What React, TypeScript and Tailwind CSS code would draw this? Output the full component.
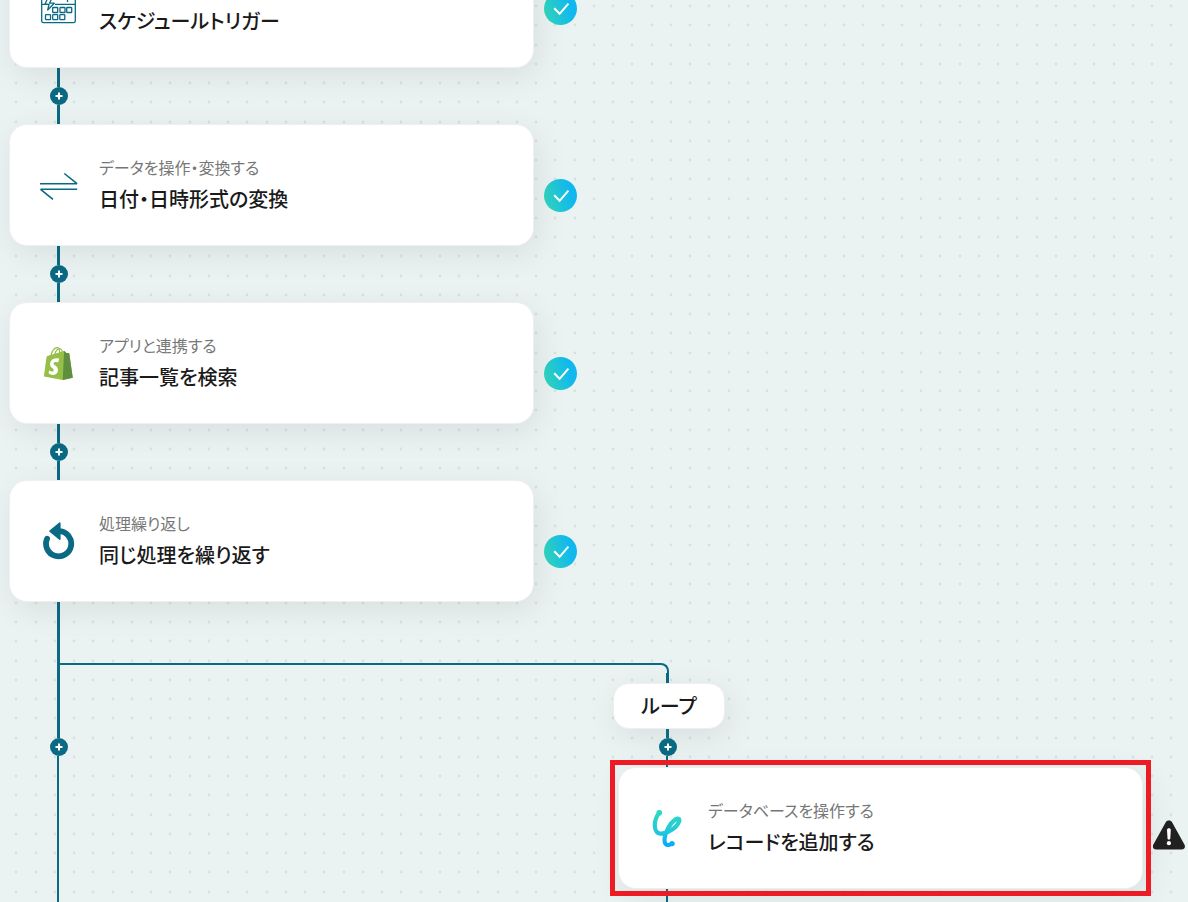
import React from 'react';

const ScheduleIcon: React.FC = () => (
  <svg className="size-[38px]" viewBox="0 0 38 38" fill="none" stroke="#0a6a83" strokeWidth="1.3" aria-hidden="true">
    <path d="M11.5 5H3.5C2.4 5 1.7 5.7 1.7 6.7V33C1.7 34 2.4 34.6 3.5 34.6H33.6C34.6 34.6 35.3 34 35.3 33V6.7C35.3 5.7 34.6 5 33.6 5H17" />
    <path d="M2 16.4H8M15 16.4H35M27.5 9V14" />
    <path d="M13.5 7H9L5 16.3H9L7.7 22L14.3 15.2H9.5Z" strokeLinejoin="round" />
    <rect x="12.7" y="19.5" width="5" height="5" rx="0.6" />
    <rect x="20" y="19.5" width="5" height="5" rx="0.6" />
    <rect x="26.7" y="19.5" width="5" height="5" rx="0.6" />
    <rect x="5.5" y="26.6" width="5" height="5" rx="0.6" />
    <rect x="12.7" y="26.6" width="5" height="5" rx="0.6" />
    <rect x="19.8" y="26.6" width="5" height="5" rx="0.6" />
  </svg>
);

const ConvertIcon: React.FC = () => (
  <svg className="size-[38px]" viewBox="0 0 38 38" fill="none" stroke="#0a6a83" strokeWidth="1.6" aria-hidden="true">
    <path d="M0 17.7H37L24.3 7.5" strokeLinejoin="bevel" />
    <path d="M37.2 23.3H0.6L13 33.4" strokeLinejoin="bevel" />
  </svg>
);

const ShopifyIcon: React.FC = () => (
  <svg className="h-[33px] w-[30px]" viewBox="0 0 256 292" preserveAspectRatio="xMinYMid" aria-hidden="true">
    <path
      fill="#95BF46"
      d="M223.774 57.34c-.201-1.46-1.48-2.268-2.537-2.357-1.055-.088-23.383-1.743-23.383-1.743s-15.507-15.395-17.209-17.099c-1.703-1.703-5.029-1.185-6.32-.805-.19.056-3.388 1.043-8.678 2.68-5.18-14.906-14.322-28.604-30.405-28.604-.444 0-.901.018-1.358.044C129.31 3.407 123.644.779 118.75.779c-37.465 0-55.364 46.835-60.976 70.635-14.558 4.511-24.9 7.718-26.221 8.133-8.126 2.549-8.383 2.805-9.45 10.462C21.3 95.806.038 260.235.038 260.235l165.678 31.042 89.77-19.42S223.973 58.8 223.775 57.34zM156.49 40.848l-14.019 4.339c.005-.988.01-1.96.01-3.023 0-9.264-1.286-16.723-3.349-22.636 8.287 1.04 13.806 10.469 17.358 21.32zm-27.638-19.483c2.304 5.773 3.802 14.058 3.802 25.238 0 .572-.005 1.095-.01 1.624-9.117 2.824-19.024 5.89-28.953 8.966 5.575-21.516 16.025-31.908 25.161-35.828zm-11.131-10.537c1.617 0 3.246.549 4.805 1.622-12.007 5.65-24.877 19.88-30.312 48.297l-22.886 7.088C75.694 46.16 90.81 10.828 117.72 10.828z"
    />
    <path
      fill="#5E8E3E"
      d="M221.237 54.983c-1.055-.088-23.383-1.743-23.383-1.743s-15.507-15.395-17.209-17.099c-.637-.634-1.496-.959-2.394-1.099l-12.527 256.233 89.762-19.418S223.972 58.8 223.774 57.34c-.201-1.46-1.48-2.268-2.537-2.357"
    />
    <path
      fill="#fff"
      d="M135.242 104.585l-11.069 32.926s-9.698-5.176-21.586-5.176c-17.428 0-18.305 10.937-18.305 13.693 0 15.038 39.2 20.8 39.2 56.024 0 27.713-17.577 45.558-41.277 45.558-28.44 0-42.984-17.7-42.984-17.7l7.615-25.16s14.95 12.835 27.565 12.835c8.243 0 11.596-6.49 11.596-11.232 0-19.616-32.16-20.491-32.16-52.724 0-27.129 19.472-53.382 58.778-53.382 15.145 0 22.627 4.338 22.627 4.338z"
    />
  </svg>
);

const RepeatIcon: React.FC = () => (
  <svg className="size-[38px]" viewBox="0 0 38 38" fill="none" aria-hidden="true">
    <path d="M19.5 9.2A12.6 12.6 0 1 1 7.1 16.7" stroke="#0a6a83" strokeWidth="5.8" strokeLinecap="round" />
    <path d="M10 9.2L19.8 1.2V17.2Z" fill="#0a6a83" stroke="#0a6a83" strokeWidth="1.6" strokeLinejoin="round" />
  </svg>
);

const DatabaseIcon: React.FC = () => (
  <svg className="size-[38px]" viewBox="0 0 38 38" fill="none" aria-hidden="true">
    <defs>
      <linearGradient id="database-gradient" x1="0" y1="0" x2="0" y2="38" gradientUnits="userSpaceOnUse">
        <stop offset="0.1" stopColor="#2dd8c0" />
        <stop offset="0.6" stopColor="#22c8dc" />
        <stop offset="0.95" stopColor="#06adf8" />
      </linearGradient>
    </defs>
    <path
      d="M10.3 3.4C7 8 5.6 12.6 5.8 17C6 22.4 8.6 25.2 13 24.6C21 23.6 28.6 17.6 30.2 12.2C30.9 9.6 28.8 9 26.4 10.4C20.6 14.2 16.4 23 15.6 29.6C15.2 34 16.8 36.2 19.4 36C21.6 35.8 22 34.6 23.4 34.8"
      stroke="url(#database-gradient)"
      strokeWidth="4.2"
      strokeLinecap="round"
    />
    <circle cx="10.3" cy="3.7" r="2.8" fill="url(#database-gradient)" />
    <circle cx="23" cy="34.6" r="2.6" fill="url(#database-gradient)" />
  </svg>
);

const DoneBadge: React.FC = () => (
  <svg className="size-[33px]" viewBox="0 0 33 33" fill="none" role="img" aria-label="完了">
    <defs>
      <linearGradient id="done-gradient" x1="3" y1="20" x2="30" y2="13" gradientUnits="userSpaceOnUse">
        <stop stopColor="#2ed3c1" />
        <stop offset="0.85" stopColor="#11b8ee" />
      </linearGradient>
    </defs>
    <circle cx="16.5" cy="16.5" r="16.5" fill="url(#done-gradient)" />
    <path d="M10.2 16.2L15.6 21.8L24.4 11.6" stroke="#fff" strokeWidth="2" />
  </svg>
);

const WarningBadge: React.FC = () => (
  <svg className="h-9 w-[33px]" viewBox="0 0 33 36" role="img" aria-label="警告">
    <path
      d="M12.6 2.4C13.9 0 17.9 0 19.2 2.4L31.4 24.4C32.9 27.2 31.2 29.4 28.6 29.4H3.2C0.6 29.4 -1.1 27.2 0.4 24.4Z"
      fill="#212121"
    />
    <path d="M14 10C14 7.6 17.8 7.6 17.8 10L17.3 18.6C17.2 20 14.6 20 14.5 18.6Z" fill="#fff" />
    <circle cx="15.9" cy="23.2" r="2.1" fill="#fff" />
  </svg>
);

const AddStepButton: React.FC = () => (
  <button
    type="button"
    aria-label="ステップを追加"
    className="flex size-[18px] shrink-0 items-center justify-center rounded-full bg-[#0a6a83]"
  >
    <svg className="size-2" viewBox="0 0 8 8" stroke="#fff" strokeWidth="2" aria-hidden="true">
      <path d="M4 0.5V7.5M0.5 4H7.5" />
    </svg>
  </button>
);

const Connector: React.FC = () => (
  <div className="ml-[41px] flex h-14 w-[18px] flex-col">
    <div className="ml-[7px] w-[3px] flex-1 bg-[#0a6a83]" />
    <AddStepButton />
    <div className="ml-[7px] w-[3px] flex-1 bg-[#0a6a83]" />
  </div>
);

interface StepProps {
  icon: React.FC;
  title: string;
  category?: string;
  highlighted?: boolean;
}

const StepCard: React.FC<StepProps> = ({ icon: Icon, title, category, highlighted }) => (
  <div className="flex items-center gap-2.5">
    <div className="relative w-[525px] shrink-0">
      <div className="flex h-[122px] items-center gap-[21px] rounded-[18px] border border-[#efefef] bg-white pl-[30px] shadow-[4px_8px_32px_rgba(0,0,0,0.08)]">
        <div className="flex w-[38px] shrink-0 justify-center">
          <Icon />
        </div>
        <div className="flex h-16 flex-col justify-end">
          {category && <p className="text-[16px] leading-7 text-[#777777]">{category}</p>}
          <h2 className="text-[20px] leading-9 font-medium text-[#1a1a1a]">{title}</h2>
        </div>
      </div>
      {highlighted && <div className="pointer-events-none absolute -inset-x-2 -inset-y-[7px] border-5 border-[#ed1c24]" />}
    </div>
    <div className={category ? 'mt-5' : 'mt-0.5'}>{highlighted ? <WarningBadge /> : <DoneBadge />}</div>
  </div>
);

const steps: StepProps[] = [
  { icon: ScheduleIcon, title: 'スケジュールトリガー' },
  { icon: ConvertIcon, category: 'データを操作・変換する', title: '日付・日時形式の変換' },
  { icon: ShopifyIcon, category: 'アプリと連携する', title: '記事一覧を検索' },
  { icon: RepeatIcon, category: '処理繰り返し', title: '同じ処理を繰り返す' },
];

const dotColumns = [2, 22, 41, 60];
const dotRows = [2, 21, 41, 60];

const DotGrid: React.FC = () => (
  <svg className="absolute inset-0 size-full" aria-hidden="true">
    <defs>
      <pattern id="dots" x="14" y="4" width="77" height="77" patternUnits="userSpaceOnUse">
        {dotRows.map((y) => dotColumns.map((x) => <circle key={`${x}-${y}`} cx={x} cy={y} r="1.4" fill="#d9e1e0" />))}
      </pattern>
    </defs>
    <rect width="100%" height="100%" fill="url(#dots)" />
  </svg>
);

const App: React.FC = () => {
  return (
    <main className="relative flex min-h-screen flex-col overflow-hidden bg-[#eaf3f2] font-['Noto_Sans_CJK_JP','Noto_Sans',sans-serif] [font-feature-settings:'palt']">
      <DotGrid />

      <div className="relative -mt-[54px] flex flex-1 flex-col pl-[9px]">
        {/* Main flow */}
        {steps.map((step, index) => (
          <React.Fragment key={step.title}>
            {index > 0 && <Connector />}
            <StepCard {...step} />
          </React.Fragment>
        ))}

        <div className="flex flex-1">
          {/* Trunk after the loop step */}
          <div className="ml-[41px] flex w-[18px] shrink-0 flex-col">
            <div className="ml-[7px] h-[136px] w-[3px] bg-[#0a6a83]" />
            <AddStepButton />
            <div className="ml-[7px] w-0.5 flex-1 bg-[#0a6a83]" />
          </div>

          {/* Loop branch */}
          <div className="-ml-2 flex flex-col pt-[61px]">
            <div className="h-2.5 w-[609px] rounded-tr-[8px] border-t-2 border-r-2 border-[#0a6a83]" />
            <div className="ml-[558px] flex flex-1 flex-col">
              <div className="ml-12 h-2.5 w-[3px] bg-[#0a6a83]" />
              <div className="-ml-[5px] flex h-[46px] w-28 items-center justify-center rounded-[16px] border border-[#efefef] bg-white text-[20px] font-medium text-[#1a1a1a] shadow-[4px_8px_32px_rgba(0,0,0,0.08)]">
                ループ
              </div>
              <div className="ml-[41px] flex w-[18px] flex-col">
                <div className="ml-[7px] h-[9px] w-[3px] bg-[#0a6a83]" />
                <AddStepButton />
                <div className="ml-[7px] h-[11px] w-0.5 bg-[#0a6a83]" />
              </div>
              <StepCard icon={DatabaseIcon} category="データベースを操作する" title="レコードを追加する" highlighted />
              <div className="ml-12 w-0.5 flex-1 bg-[#0a6a83]" />
            </div>
          </div>
        </div>
      </div>
    </main>
  );
};

export default App;
